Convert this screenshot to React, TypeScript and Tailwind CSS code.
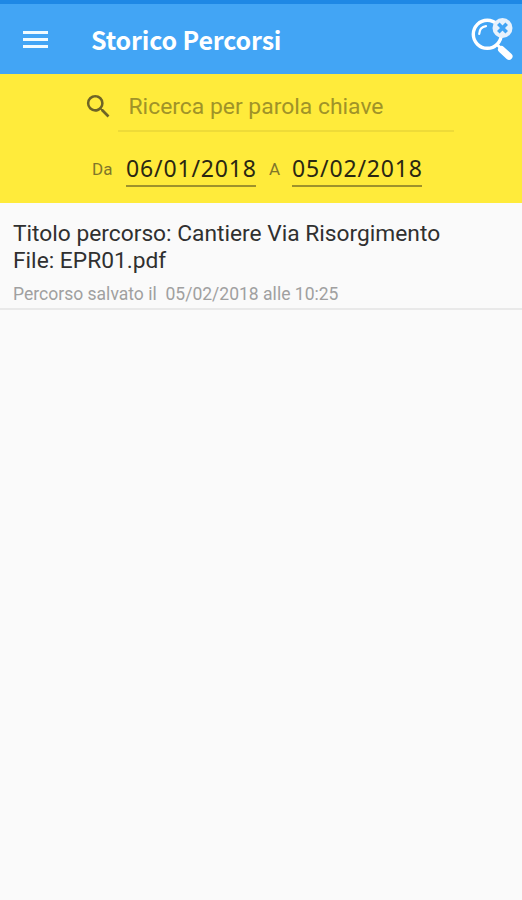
import React, { useState } from "react";

type Route = {
  title: string;
  file: string;
  date: string;
  time: string;
};

const routes: Route[] = [
  {
    title: "Cantiere Via Risorgimento",
    file: "EPR01.pdf",
    date: "05/02/2018",
    time: "10:25",
  },
];

const ClearSearchIcon = () => (
  <svg width="44" height="44" viewBox="0 0 44 44" fill="none">
    <circle cx="17.3" cy="17.3" r="14" stroke="white" strokeWidth="3.4" />
    <path
      d="M9.2 17C9.4 12.8 12 9.8 16 9.2"
      stroke="white"
      strokeWidth="2.2"
      strokeLinecap="round"
    />
    <path d="M27.5 28L33 33.5" stroke="white" strokeWidth="3" />
    <path
      d="M31.5 32.5L39 39.3"
      stroke="white"
      strokeWidth="7"
      strokeLinecap="round"
    />
    <circle cx="32.5" cy="11" r="10" fill="#e8f2fc" />
    <path
      d="M28.3 6.8L36.7 15.2M36.7 6.8L28.3 15.2"
      stroke="#42a5f5"
      strokeWidth="3.6"
    />
  </svg>
);

const App = () => {
  const [keyword, setKeyword] = useState("");

  return (
    <div className="flex min-h-screen w-full flex-col bg-[#fafafa] font-[Roboto,sans-serif]">
      {/* Status bar */}
      <div className="h-1 bg-[#1e88e5]"></div>
      {/* Toolbar */}
      <div className="flex h-[70px] items-center bg-[#42a5f5] pr-2 pl-[23px]">
        <button className="flex w-[25px] flex-col gap-[4px]">
          <span className="h-[3px] w-full bg-[#f0fbff]"></span>
          <span className="h-[3px] w-full bg-[#f0fbff]"></span>
          <span className="h-[3px] w-full bg-[#f0fbff]"></span>
        </button>
        <h1 className="ml-[43px] flex-1 font-['Noto_Sans_CJK_SC',sans-serif] text-[25px] leading-9 font-bold tracking-[-0.15px] text-white">
          Storico Percorsi
        </h1>
        <button>
          <ClearSearchIcon />
        </button>
      </div>

      {/* Filters */}
      <div className="h-[129px] bg-[#ffeb3b] pt-2">
        <div className="flex pl-[83px]">
          <svg
            className="mt-[9px]"
            width="31"
            height="31"
            viewBox="0 0 24 24"
            fill="#6e6426"
          >
            <path d="M15.5 14h-.79l-.28-.27A6.471 6.471 0 0 0 16 9.5 6.5 6.5 0 1 0 9.5 16c1.61 0 3.09-.59 4.23-1.57l.27.28v.79l5 4.99L20.49 19l-4.99-5zm-6 0C7.01 14 5 11.99 5 9.5S7.01 5 9.5 5 14 7.01 14 9.5 11.99 14 9.5 14z" />
          </svg>
          <input
            className="ml-1 h-[50px] w-[336px] border-b-2 border-[#eedb38] px-[10.5px] text-[22.9px] text-[#333] outline-none placeholder:text-[#a09328]"
            placeholder="Ricerca per parola chiave"
            value={keyword}
            onChange={(e) => setKeyword(e.target.value)}
          />
        </div>
        <div className="mt-5 flex items-start pl-[92px]">
          <span className="mt-[5px] w-[34px] text-[17px] leading-6 text-[#81762a]">
            Da
          </span>
          <span className="h-[35px] w-[130px] border-b-2 border-[#9f922b] font-['Noto_Sans',sans-serif] text-[23px] leading-[33px] tracking-[0.85px] whitespace-nowrap text-[#2a2712]">
            06/01/2018
          </span>
          <span className="mt-[5px] ml-[13px] w-[23px] text-[17px] leading-6 text-[#81762a]">
            A
          </span>
          <span className="h-[35px] w-[130px] border-b-2 border-[#9f922b] font-['Noto_Sans',sans-serif] text-[23px] leading-[33px] tracking-[0.85px] whitespace-nowrap text-[#2a2712]">
            05/02/2018
          </span>
        </div>
      </div>

      {/* Saved routes */}
      {routes.map((route, index) => (
        <div
          key={index}
          className="h-[107px] border-b-2 border-[#e9e9e9] px-[13px] pt-[18px]"
        >
          <p className="text-[22.75px] leading-[26.5px] text-[#303030]">
            Titolo percorso: {route.title}
          </p>
          <p className="text-[22.75px] leading-[26.5px] text-[#303030]">
            File: {route.file}
          </p>
          <p className="mt-2 text-[17.55px] leading-6 whitespace-pre text-[#a0a0a0]">
            Percorso salvato il {" "}{route.date} alle {route.time}
          </p>
        </div>
      ))}
    </div>
  );
};

export default App;
